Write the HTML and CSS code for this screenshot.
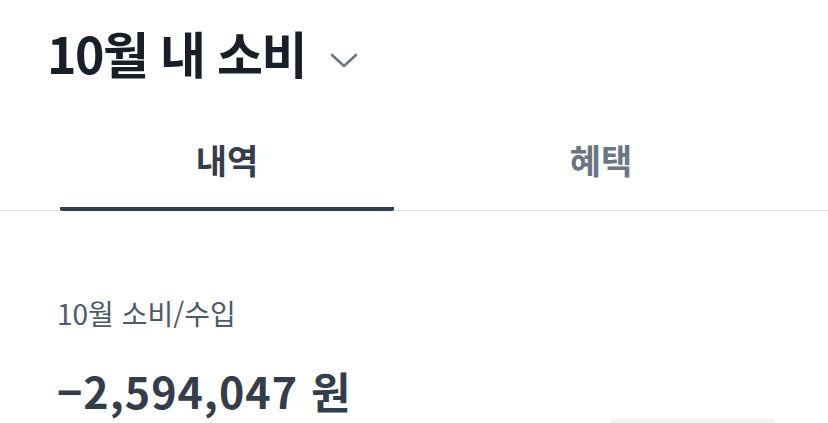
FILE: index.html
```html
<!DOCTYPE html>
<html lang="ko">

<head>
    <meta charset="UTF-8">
    <meta name="viewport" content="width=device-width, initial-scale=1.0">
    <title>10월 내 소비</title>
    <link rel="stylesheet" href="styles.css">
</head>

<body>
    <!-- 상단 제목 -->
    <div class="head">
        <h1 class="title">10월 내 소비</h1>
        <svg class="chev" width="28" height="16" viewBox="0 0 28 16">
            <path d="M2 2 L14 13 L26 2" fill="none" stroke="#6b7684" stroke-width="2.6" stroke-linecap="round" stroke-linejoin="round" />
        </svg>
    </div>

    <!-- 탭 -->
    <div class="tabs">
        <a class="tab on" href="javascript:;">내역</a>
        <a class="tab" href="javascript:;">혜택</a>
    </div>

    <!-- 이번달 합계 -->
    <div class="sum">
        <p class="sum-label">10월 소비/수입</p>
        <p class="sum-value">−2,594,047 원</p>
        <div class="sum-btn"></div>
    </div>
</body>

</html>
```

FILE: styles.css
```css
* {
    margin: 0;
    padding: 0;
}

html,
body {
    height: 423px;
    overflow: hidden;
}

body {
    background-color: #fff;
    font-family: "Noto Sans CJK KR", "Noto Sans", sans-serif;
}

.head {
    display: flex;
    align-items: center;
    gap: 24px;
    padding: 19px 0 0 47px;
    height: 66px;
}

.title {
    font-size: 50px;
    font-weight: 700;
    color: #191f28;
    letter-spacing: -1.5px;
    line-height: 66px;
}

.chev {
    margin-top: 18px;
}

.tabs {
    display: flex;
    gap: 40px;
    padding: 0 60px;
    margin-top: 27px;
    border-bottom: 1px solid #dcdcdc;
}

.tab {
    flex: 1;
    display: block;
    text-align: center;
    height: 95px;
    line-height: 95px;
    font-size: 34px;
    font-weight: 700;
    color: #6b7684;
    text-decoration: none;
    border-bottom: 4px solid transparent;
    margin-bottom: -1px;
}

.tab.on {
    color: #333d4b;
    border-bottom-color: #333d4b;
    border-radius: 2px;
}

.sum {
    position: relative;
    padding: 82px 0 0 57px;
}

.sum-label {
    font-size: 28px;
    color: #4e5968;
    line-height: 40px;
}

.sum-value {
    margin-top: 32px;
    font-size: 43px;
    font-weight: 700;
    color: #333d4b;
    letter-spacing: 1px;
    line-height: 50px;
}

.sum-btn {
    position: absolute;
    left: 610px;
    top: 208px;
    width: 165px;
    height: 4px;
    background-color: #f4f4f5;
    border-radius: 4px 4px 0 0;
    box-shadow: 0 -1px 3px rgba(0, 0, 0, 0.04);
}
```
